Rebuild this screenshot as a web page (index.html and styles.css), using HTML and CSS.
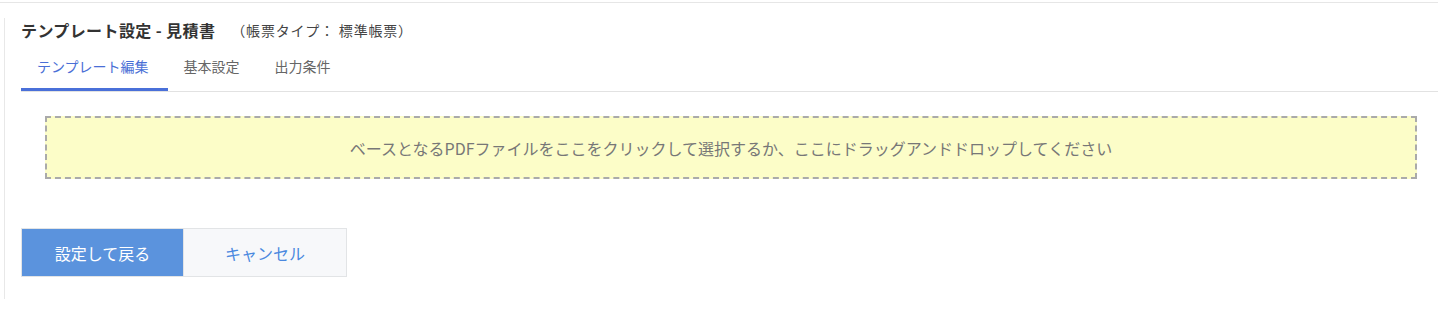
FILE: index.html
```html
<!DOCTYPE html>
<html lang="ja">
<head>
<meta charset="utf-8">
<link rel="stylesheet" href="styles.css">
</head>
<body>
<div class="topline"></div>
<div class="panel">
  <div class="title-row">
    <span class="title">テンプレート設定 - 見積書</span>
    <span class="subtitle">（帳票タイプ： 標準帳票）</span>
  </div>
  <div class="tabs">
    <div class="tab active">テンプレート編集</div>
    <div class="tab">基本設定</div>
    <div class="tab">出力条件</div>
  </div>
  <div class="dropzone">ベースとなるPDFファイルをここをクリックして選択するか、ここにドラッグアンドドロップしてください</div>
  <div class="actions">
    <div class="btn-group">
      <button class="btn primary">設定して戻る</button>
      <button class="btn secondary">キャンセル</button>
    </div>
  </div>
</div>
</body>
</html>
```
FILE: styles.css
```css
html, body {
  margin: 0;
  padding: 0;
  background: #fff;
  font-family: "Noto Sans CJK JP", "Noto Sans", sans-serif;
  color: #333;
  text-spacing-trim: space-all;
}
.topline {
  margin-top: 2px;
  border-top: 1px solid #e6e6e6;
}
.panel {
  margin: 15px 0 0 4px;
  border-left: 1px solid #e8e8e8;
  padding: 0 0 22px 16px;
}
.title-row {
  height: 24px;
  display: flex;
  align-items: center;
  margin-bottom: 4px;
}
.title {
  font-size: 16px;
  font-weight: bold;
  color: #333;
  letter-spacing: 0.4px;
}
.subtitle {
  font-size: 14px;
  color: #444;
  margin-left: 16px;
  letter-spacing: 0.8px;
}
.tabs {
  display: flex;
  border-bottom: 1px solid #e2e2e2;
}
.tab {
  font-size: 14px;
  line-height: 20px;
  padding: 10px 19px 12px 16px;
  color: #666;
  border-bottom: 3px solid transparent;
}
.tab.active {
  color: #4a6fd6;
  border-bottom-color: #4a70d9;
}
.dropzone {
  margin: 24px 21px 0 24px;
  height: 63px;
  box-sizing: border-box;
  border: 2px dashed #aaaaaa;
  background: #fcfdc8;
  color: #777;
  font-size: 16px;
  display: flex;
  align-items: center;
  justify-content: center;
}
.actions {
  margin-top: 49px;
  display: flex;
}
.btn-group {
  display: flex;
  border: 1px solid #e2e4e6;
}
.btn {
  font-family: inherit;
  font-size: 16px;
  height: 47px;
  border: none;
  margin: 0;
  padding: 0;
  cursor: pointer;
}
.btn.primary {
  width: 162px;
  background: #5b93dd;
  color: #fff;
  border-right: 1px solid #e2e4e6;
}
.btn.secondary {
  width: 162px;
  background: #f7f8fa;
  color: #4a88df;
}
```
